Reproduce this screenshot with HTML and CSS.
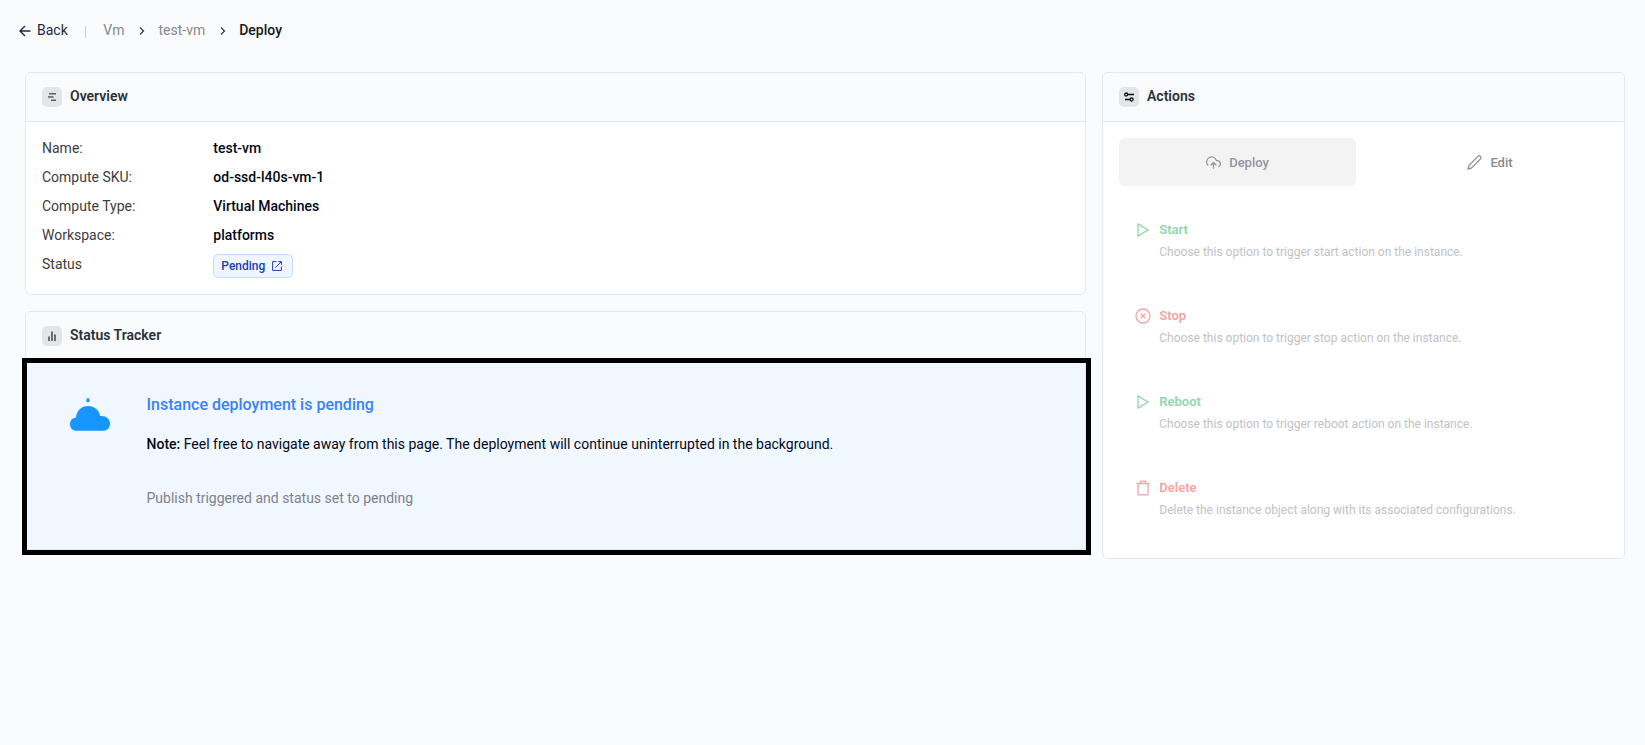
FILE: index.html
```html
<!DOCTYPE html>
<html lang="en">
<head>
    <meta charset="UTF-8">
    <meta name="viewport" content="width=device-width, initial-scale=1.0">
    <title>Deploy - test-vm</title>
    <link rel="stylesheet" href="styles.css">
</head>
<body>
    <nav class="breadcrumb">
        <a class="back">
            <svg width="12" height="12" viewBox="0 0 12 12" fill="none" stroke="currentColor" stroke-width="1.4"><path d="M11.5 6H1M6 1L1 6l5 5"/></svg>
            Back
        </a>
        <span class="divider"></span>
        <a class="crumb">Vm</a>
        <svg class="chevron" width="6" height="8" viewBox="0 0 6 8" fill="none" stroke="currentColor" stroke-width="1.2"><path d="M1 .5L4.500 4 1 7.500"/></svg>
        <a class="crumb">test-vm</a>
        <svg class="chevron" width="6" height="8" viewBox="0 0 6 8" fill="none" stroke="currentColor" stroke-width="1.2"><path d="M1 .5L4.500 4 1 7.500"/></svg>
        <span class="current">Deploy</span>
    </nav>

    <main class="layout">
        <div class="column">
            <section class="card">
                <div class="card-header">
                    <span class="header-icon">
                        <svg width="20" height="20" viewBox="0 0 20 20" fill="none" stroke="#5c5f66" stroke-width="1.5"><path d="M7 6.8h7M6 10h5.5M9 13.2h5"/></svg>
                    </span>
                    <h2>Overview</h2>
                </div>
                <dl class="details">
                    <dt>Name:</dt>
                    <dd>test-vm</dd>
                    <dt>Compute SKU:</dt>
                    <dd>od-ssd-l40s-vm-1</dd>
                    <dt>Compute Type:</dt>
                    <dd>Virtual Machines</dd>
                    <dt>Workspace:</dt>
                    <dd>platforms</dd>
                    <dt>Status</dt>
                    <dd>
                        <a class="badge">
                            Pending
                            <svg width="10" height="10" viewBox="0 0 10 10" fill="none" stroke="currentColor" stroke-width="1"><path d="M4.5.6H.6v8.8h8.8V5.5M6.2.6h3.2v3.2M9.2.8L3.3 6.7"/></svg>
                        </a>
                    </dd>
                </dl>
            </section>

            <section class="card tracker">
                <div class="card-header">
                    <span class="header-icon">
                        <svg width="20" height="20" viewBox="0 0 20 20" fill="none" stroke="#6a6c72" stroke-width="2"><path d="M7 10.5V15M10 5.5V15M13 8.5V15"/></svg>
                    </span>
                    <h2>Status Tracker</h2>
                </div>
                <div class="tracker-body">
                    <svg class="cloud" width="40" height="34" viewBox="0 0 40 34" fill="#1896ff">
                        <ellipse cx="18" cy="3.200" rx="1.700" ry="2.200"/>
                        <path d="M6.500 33.700C2.500 33.700 0 31 0 27.200c0-3.600 2.500-6.400 6-6.700C6.300 13.800 11.500 9 18.200 9c6 0 11 4.200 12 10C36 18.400 40 21.800 40 26.500c0 4.200-2.700 7.200-6.500 7.200z"/>
                    </svg>
                    <div>
                        <h3>Instance deployment is pending</h3>
                        <p class="note"><strong>Note:</strong> Feel free to navigate away from this page. The deployment will continue uninterrupted in the background.</p>
                        <p class="message">Publish triggered and status set to pending</p>
                    </div>
                </div>
                <div class="highlight"></div>
            </section>
        </div>

        <section class="card actions">
            <div class="card-header">
                <span class="header-icon">
                    <svg width="20" height="20" viewBox="0 0 20 20" fill="none" stroke="#111" stroke-width="1.3"><circle cx="7.200" cy="7.500" r="1.500"/><path d="M8.700 7.500H15M6 12.500h5"/><circle cx="12.600" cy="12.500" r="1.500"/></svg>
                </span>
                <h2>Actions</h2>
            </div>
            <div class="actions-body">
                <div class="buttons">
                    <button class="btn btn-deploy" disabled>
                        <svg width="15" height="15" viewBox="0 0 24 24" fill="none" stroke="currentColor" stroke-width="2" stroke-linecap="round" stroke-linejoin="round"><path d="M16 16l-4-4-4 4M12 12v9"/><path d="M20.390 18.390A5 5 0 0 0 18 9h-1.260A8 8 0 1 0 3 16.300"/></svg>
                        Deploy
                    </button>
                    <button class="btn" disabled>
                        <svg width="15" height="15" viewBox="0 0 16 16" fill="none" stroke="currentColor" stroke-width="1.300" stroke-linejoin="round"><path d="M11.600 1.400a1.900 1.900 0 0 1 2.800 2.800L5 13.800l-4 1.200 1.200-4z"/></svg>
                        Edit
                    </button>
                </div>
                <ul class="action-list">
                    <li class="action go">
                        <svg width="16" height="16" viewBox="0 0 16 16" fill="none" stroke="currentColor" stroke-width="1.300"><path d="M3 2v12l10-6z"/></svg>
                        <div>
                            <h4>Start</h4>
                            <p>Choose this option to trigger start action on the instance.</p>
                        </div>
                    </li>
                    <li class="action danger">
                        <svg width="16" height="16" viewBox="0 0 16 16" fill="none" stroke="currentColor" stroke-width="1.300"><circle cx="8" cy="8" r="7"/><path d="M5.700 5.700l4.600 4.600M10.300 5.700l-4.600 4.600"/></svg>
                        <div>
                            <h4>Stop</h4>
                            <p>Choose this option to trigger stop action on the instance.</p>
                        </div>
                    </li>
                    <li class="action go">
                        <svg width="16" height="16" viewBox="0 0 16 16" fill="none" stroke="currentColor" stroke-width="1.300"><path d="M3 2v12l10-6z"/></svg>
                        <div>
                            <h4>Reboot</h4>
                            <p>Choose this option to trigger reboot action on the instance.</p>
                        </div>
                    </li>
                    <li class="action danger">
                        <svg width="16" height="16" viewBox="0 0 16 16" fill="none" stroke="currentColor" stroke-width="1.300" stroke-linejoin="round"><path d="M1.500 3.500h13M5.500 3.500V1.200h5v2.300M3 3.500v11.300h10V3.500"/></svg>
                        <div>
                            <h4>Delete</h4>
                            <p>Delete the instance object along with its associated configurations.</p>
                        </div>
                    </li>
                </ul>
            </div>
        </section>
    </main>
</body>
</html>
```
FILE: styles.css
```css
* {
    box-sizing: border-box;
}
body {
    margin: 0;
    background: #fafbfd;
    font-family: Roboto, sans-serif;
    font-size: 14px;
    line-height: 21px;
    color: #020817;
}
h2, h3, h4, p, ul, dl, dd {
    margin: 0;
    padding: 0;
}
.breadcrumb {
    display: flex;
    align-items: center;
    height: 60px;
    padding-left: 19px;
}
.back {
    display: flex;
    align-items: center;
    gap: 6px;
    color: #222744;
}
.back svg {
    margin-top: 2px;
}
.divider {
    width: 1px;
    height: 12px;
    margin: 3px 17.5px 0 17px;
    background: #d0d2d6;
}
.crumb {
    color: #888;
}
.chevron {
    margin: 2px 13px 0 15px;
    color: #333;
}
.current {
    font-weight: 500;
    color: #171717;
}
.layout {
    display: grid;
    grid-template-columns: 1061px 523px;
    gap: 16px;
    align-items: start;
    padding: 12px 0 0 25px;
}
.column {
    display: flex;
    flex-direction: column;
    gap: 16px;
}
.card {
    background: #fff;
    border: 1px solid #e2e8f0;
    border-radius: 6px;
}
.card-header {
    display: flex;
    align-items: center;
    gap: 8px;
    height: 49px;
    padding: 0 16px;
    border-bottom: 1px solid #e2e8f0;
    border-radius: 6px 6px 0 0;
    background: #fafbfd;
}
.header-icon {
    width: 20px;
    height: 20px;
    border-radius: 5px;
    background: #e4e5e8;
}
.header-icon svg {
    display: block;
}
.card-header h2 {
    padding-bottom: 2px;
    font-size: 14px;
    font-weight: 600;
    color: #2b303b;
}
.details {
    display: grid;
    grid-template-columns: 171.3px 1fr;
    row-gap: 8px;
    padding: 16px;
}
.details dt {
    color: #3d3d3d;
}
.details dd {
    font-weight: 500;
}
.badge {
    display: flex;
    align-items: center;
    gap: 7px;
    width: 80px;
    height: 24px;
    padding: 0 7px;
    border: 1px solid #bfdbfe;
    border-radius: 5px;
    background: #eff6ff;
    font-size: 12px;
    color: #1e40af;
}
.tracker {
    position: relative;
    height: 239px;
    border-radius: 6px 6px 0 0;
}
.tracker-body {
    display: flex;
    gap: 36.5px;
    height: 188px;
    padding: 32px 44px;
    background: #f0f7ff;
}
.cloud {
    flex-shrink: 0;
    margin-top: 4px;
}
.tracker h3 {
    font-size: 16px;
    font-weight: 500;
    line-height: 24px;
    color: #3b82f6;
}
.note {
    margin-top: 17px;
}
.note strong {
    font-weight: 500;
}
.message {
    margin-top: 33px;
    color: #808289;
}
/* frame drawn around the deployment message */
.highlight {
    position: absolute;
    top: 46px;
    right: -6px;
    bottom: -6px;
    left: -4px;
    border: 5px solid #000;
}
.actions {
    height: 487px;
}
.actions-body {
    padding: 16px;
}
.buttons {
    display: grid;
    grid-template-columns: 237px 1fr;
    gap: 16px;
}
.btn {
    display: flex;
    align-items: center;
    justify-content: center;
    gap: 8px;
    height: 48px;
    padding: 0;
    border: none;
    border-radius: 6px;
    background: none;
    font-family: inherit;
    font-size: 13px;
    font-weight: 500;
    color: #8b8b8b;
}
.btn-deploy {
    background: #f3f3f3;
    color: #9395a1;
}
.action-list {
    margin-top: 12px;
    list-style: none;
}
.action {
    display: flex;
    gap: 8.3px;
    height: 86px;
    padding: 22px 16px;
}
.action svg {
    flex-shrink: 0;
    margin-top: 2px;
}
.action h4 {
    font-size: 13px;
    font-weight: 600;
    line-height: 20px;
}
.action p {
    margin-top: 3px;
    font-size: 12px;
    line-height: 19px;
    color: #c2c2c4;
}
.go {
    color: #90d6ab;
}
.danger {
    color: #f8a3a3;
}
```
